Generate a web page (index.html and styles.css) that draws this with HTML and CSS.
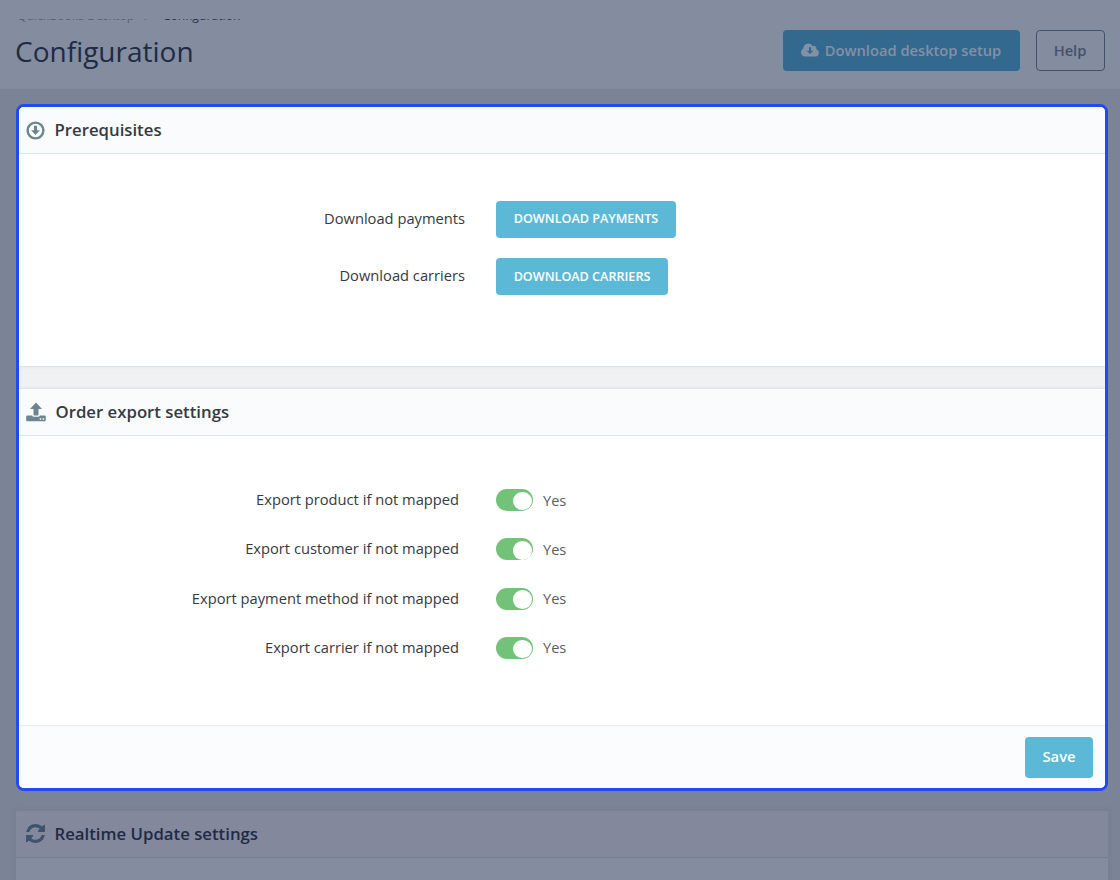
FILE: index.html
```
<!DOCTYPE html>
<html lang="en">
<head>
    <meta charset="UTF-8">
    <meta name="viewport" content="width=device-width, initial-scale=1.0">
    <title>Configuration</title>
    <link rel="stylesheet" href="styles.css">
</head>
<body>
    <header class="page-header">
        <div class="page-heading">
            <nav class="breadcrumb"><span>QuickBooks Desktop</span><span class="slash">/</span><span class="current">Configuration</span></nav>
            <h1>Configuration</h1>
        </div>
        <div class="toolbar">
            <button class="btn-setup">
                <svg width="18" height="14" viewBox="0 0 18 14"><path fill="currentColor" fill-rule="evenodd" d="M4.2 13.4A4.1 4.1 0 0 1 2.4 5.6 4.9 4.9 0 0 1 7.2.4c2.1 0 3.6 1.1 4.4 2.7a2.6 2.6 0 0 1 3.7 3.1 3.7 3.7 0 0 1-.8 7.2zM8 4.3v3.4H5.6L9 11l3.4-3.3H10V4.3z"/></svg>
                Download desktop setup
            </button>
            <button class="btn-help">Help</button>
        </div>
    </header>

    <main class="highlight">
        <section class="panel prerequisites">
            <h2 class="panel-title">
                <svg width="19" height="19" viewBox="0 0 19 19"><circle cx="9.5" cy="9.5" r="7.9" fill="none" stroke="currentColor" stroke-width="2.4"/><path fill="currentColor" d="M8 4.8h3v4.4h2.9L9.5 14 5.1 9.2H8z"/></svg>
                <span>Prerequisites</span>
            </h2>
            <div class="panel-body">
                <div class="row">
                    <label>Download payments</label>
                    <button class="btn-download payments">DOWNLOAD PAYMENTS</button>
                </div>
                <div class="row">
                    <label>Download carriers</label>
                    <button class="btn-download carriers">DOWNLOAD CARRIERS</button>
                </div>
            </div>
        </section>

        <section class="panel export">
            <h2 class="panel-title">
                <svg width="20" height="20" viewBox="0 0 20 20"><path fill="currentColor" fill-rule="evenodd" d="M10 .4l6 6.6h-3.500v5.600q0 .9-.9.9H8.400q-.9 0-.9-.9V7H4zM1.200 13.500h4.900q.4 1.300 1.700 1.300h4.400q1.300 0 1.700-1.300h4.900q1 0 1 1v3.800q0 1-1 1H1.200q-1 0-1-1v-3.800q0-1 1-1zM13.700 16.300v1.500h1.500v-1.500zM16.700 16.300v1.500h1.500v-1.500z"/></svg>
                <span>Order export settings</span>
            </h2>
            <div class="panel-body">
                <div class="row">
                    <label>Export product if not mapped</label>
                    <span class="switch"></span>
                    <span class="state">Yes</span>
                </div>
                <div class="row">
                    <label>Export customer if not mapped</label>
                    <span class="switch"></span>
                    <span class="state">Yes</span>
                </div>
                <div class="row">
                    <label>Export payment method if not mapped</label>
                    <span class="switch"></span>
                    <span class="state">Yes</span>
                </div>
                <div class="row">
                    <label>Export carrier if not mapped</label>
                    <span class="switch"></span>
                    <span class="state">Yes</span>
                </div>
            </div>
            <footer class="panel-footer">
                <button class="btn-save">Save</button>
            </footer>
        </section>
    </main>

    <section class="realtime">
        <h2 class="panel-title">
            <svg width="19" height="19" viewBox="0 0 1536 1536"><path fill="currentColor" d="M1511 928q0 5-1 7-64 268-268 434.500t-478 166.500q-146 0-282.500-55t-243.500-157l-129 129q-19 19-45 19t-45-19-19-45v-448q0-26 19-45t45-19h448q26 0 45 19t19 45-19 45l-137 137q71 66 161 102t187 36q134 0 250-65t186-179q11-17 53-117 8-23 30-23h192q13 0 22.500 9.500t9.500 22.500zm25-800v448q0 26-19 45t-45 19h-448q-26 0-45-19t-19-45 19-45l138-138q-148-137-349-137-134 0-250 65t-186 179q-11 17-53 117-8 23-30 23h-199q-13 0-22.500-9.500t-9.500-22.500v-7q65-268 270-434.500t480-166.500q146 0 284 55.500t245 156.500l130-129q19-19 45-19t45 19 19 45z"/></svg>
            <span>Realtime Update settings</span>
        </h2>
    </section>
</body>
</html>
```
FILE: styles.css
```
* {
    box-sizing: border-box;
}
body {
    margin: 0;
    height: 880px;
    overflow: hidden;
    background-color: #7b8396;
    color: #363a41;
    font-family: "Open Sans", sans-serif;
    font-size: 14.7px;
}
button {
    font-family: inherit;
    border: none;
    border-radius: 4px;
    padding: 0;
}
.page-header {
    display: flex;
    justify-content: space-between;
    height: 90px;
    padding: 19px 15.5px 0 15px;
    background-color: #848c9f;
    border-bottom: 1px solid #7a8295;
}
/* the breadcrumb is scrolled half out of view */
.breadcrumb {
    display: flex;
    align-items: flex-end;
    height: 5px;
    overflow: hidden;
    padding-left: 2px;
    font-size: 12.2px;
    line-height: 16px;
    color: #576179;
}
.breadcrumb .slash {
    margin: 0 14px 0 10px;
}
.breadcrumb .current {
    color: #2b3650;
}
.page-header h1 {
    margin: 7px 0 0;
    font-size: 28px;
    font-weight: 400;
    line-height: 40px;
    color: #202b46;
}
.toolbar {
    display: flex;
    gap: 16px;
    padding-top: 10.5px;
}
.btn-setup, .btn-help {
    display: flex;
    align-items: center;
    justify-content: center;
    height: 41px;
    padding-bottom: 1px;
    font-size: 14.7px;
    font-weight: 600;
}
.btn-setup {
    gap: 6px;
    width: 237px;
    background-color: #33698f;
    color: #8490a6;
}
.btn-help {
    width: 69px;
    background: none;
    border: 1px solid #42526c;
    color: #42526c;
}
.highlight {
    width: 1092px;
    height: 687px;
    margin: 14px 0 0 16px;
    border: 3px solid #2149f5;
    border-radius: 8px;
    overflow: hidden;
    background-color: #eff1f2;
}
.panel {
    background-color: #fff;
}
.prerequisites {
    height: 260px;
    border-bottom: 1px solid #dbe6e9;
    box-shadow: 0 0 4px rgba(0, 0, 0, 0.06);
}
.export {
    margin-top: 21px;
    border-top: 1px solid #dbe6e9;
    box-shadow: 0 0 4px rgba(0, 0, 0, 0.06);
}
.panel-title {
    display: flex;
    align-items: center;
    gap: 9.5px;
    height: 47px;
    margin: 0;
    padding-left: 7px;
    background-color: #fafbfc;
    border-bottom: 1px solid #dbe6e9;
    font-size: 16.75px;
    font-weight: 600;
}
.panel-title span {
    padding-bottom: 2px;
}
.panel-title svg {
    color: #6c868e;
}
.export .panel-title svg {
    margin-bottom: 1px;
}
.row {
    display: flex;
    align-items: center;
}
.row label {
    padding-bottom: 2px;
    text-align: right;
}
.prerequisites .panel-body {
    display: flex;
    flex-direction: column;
    gap: 20px;
    padding-top: 46.5px;
}
.prerequisites label {
    width: 446px;
    margin-right: 31px;
    padding-bottom: 3px;
}
.btn-download {
    height: 37px;
    padding-bottom: 1px;
    background-color: #5bb9d7;
    color: #fff;
    font-size: 12.6px;
    font-weight: 600;
}
.payments {
    width: 180px;
    height: 37.5px;
}
.carriers {
    width: 172px;
}
.export .panel-body {
    display: flex;
    flex-direction: column;
    gap: 27.3px;
    height: 289px;
    padding-top: 53px;
}
.export .row {
    height: 22px;
}
.export label {
    width: 440px;
    margin-right: 37px;
}
.switch {
    display: flex;
    justify-content: flex-end;
    width: 37px;
    height: 22px;
    padding: 2.8px 1.4px 0 0;
    border-radius: 11px;
    background-color: #72c279;
}
.switch::after {
    content: "";
    width: 18.5px;
    height: 18.5px;
    border-radius: 50%;
    background-color: #fff;
}
.state {
    margin-left: 10px;
    padding-bottom: 1px;
    font-size: 14.6px;
    color: #5a5e63;
}
.panel-footer {
    display: flex;
    justify-content: flex-end;
    height: 64px;
    padding: 10.5px 12px 0 0;
    background-color: #fafcfd;
    border-top: 1px solid #e8edef;
}
.btn-save {
    width: 68px;
    height: 41px;
    padding-bottom: 2px;
    background-color: #5bb9d7;
    color: #fff;
    font-size: 14.7px;
    font-weight: 600;
}
.realtime {
    width: 1094px;
    height: 100px;
    margin: 19px 0 0 15px;
    border: 1px solid #768297;
    border-radius: 4px;
    background-color: #848c9f;
    box-shadow: 0 0 4px rgba(80, 105, 125, 0.2);
}
.realtime .panel-title {
    padding-left: 10px;
    background-color: #83889d;
    border-color: #737e93;
    color: #202b46;
}
.realtime svg {
    margin-bottom: 1px;
    color: #3d536b;
}
```
